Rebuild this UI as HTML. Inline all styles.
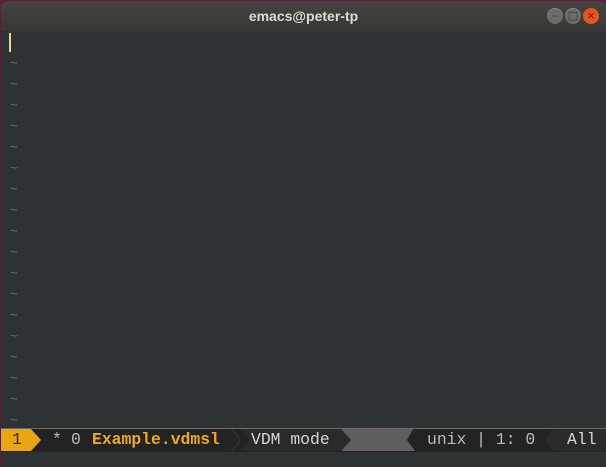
<!DOCTYPE html>
<html><head><style>
body{margin:0;width:606px;height:467px;overflow:hidden;background:#5a1f3a;font-family:"Liberation Mono",monospace;}
#win{position:absolute;left:1px;top:1px;width:605px;height:466px;background:#2d3334;border-radius:6px 6px 0 0;overflow:hidden}
#title{position:absolute;left:0;top:0;width:605px;height:30px;background:linear-gradient(#454440,#383733);color:#dfdbd2;font:bold 14px "Liberation Sans",sans-serif;text-align:center;line-height:30px}
.btn{position:absolute;top:7px;width:16px;height:16px;border-radius:50%;background:#6d6c68;box-shadow:inset 0 1px 0 #888;color:#3a3935;font:11px "DejaVu Sans",sans-serif;text-align:center;line-height:16px}
.t{position:absolute;left:9px;color:#6b7273;font-size:13px}
#ml{position:absolute;left:0;top:427px;width:605px;height:23px;border-top:1px solid #6a6a6a;background:#232323;color:#d6d6d6;font-size:16.4px;line-height:22px}
.s{position:absolute;top:0;height:22px;white-space:pre}
</style></head><body><div id="win">
<div id="title">emacs@peter-tp</div>
<div class="btn" style="left:546px">–</div>
<div class="btn" style="left:564px">□</div>
<div class="btn" style="left:582px;background:#e9541f;box-shadow:none;color:#5a1a05">×</div>
<div style="position:absolute;left:8px;top:32px;width:2px;height:19px;background:#f0dc6a"></div>
<div id="tl"></div>
<div id="ml">
<svg class="s" style="left:0" width="605" height="22">
<polygon points="0,0 30,0 40,11 30,22 0,22" fill="#e8a514"/>
<polygon points="229,0 239,11 229,22 231,22 241,11 231,0" fill="#2e2e2e"/>
<rect x="239" y="0" width="102" height="22" fill="#2a2a2a"/>
<polygon points="239,0 249,11 239,22" fill="#232323"/>
<polygon points="340,0 412,0 406,11 414,22 340,22 350,11" fill="#5f5d5f"/>
<polygon points="340,0 350,11 340,22" fill="#2a2a2a"/>
<rect x="553" y="0" width="52" height="22" fill="#2a2a2a"/>
<polygon points="553,0 544,11 553,22" fill="#2a2a2a"/>
</svg>
<span class="s" style="left:11px;color:#3a2a00">1</span>
<span class="s" style="left:51px;color:#bbb">*</span><span class="s" style="left:70px;color:#bbb">0</span>
<span class="s" style="left:91px;color:#f0a825;font-weight:bold">Example.vdmsl</span>
<span class="s" style="left:250px">VDM mode</span>
<span class="s" style="left:426px;color:#bbb">unix | 1: 0</span>
<span class="s" style="left:566px">All</span>
</div>
</div>
<script>
var h='';for(var i=0;i<18;i++){h+='<div class="t" style="top:'+(55+i*21)+'px">~</div>';}
document.getElementById('tl').innerHTML=h;
</script>
</body></html>
